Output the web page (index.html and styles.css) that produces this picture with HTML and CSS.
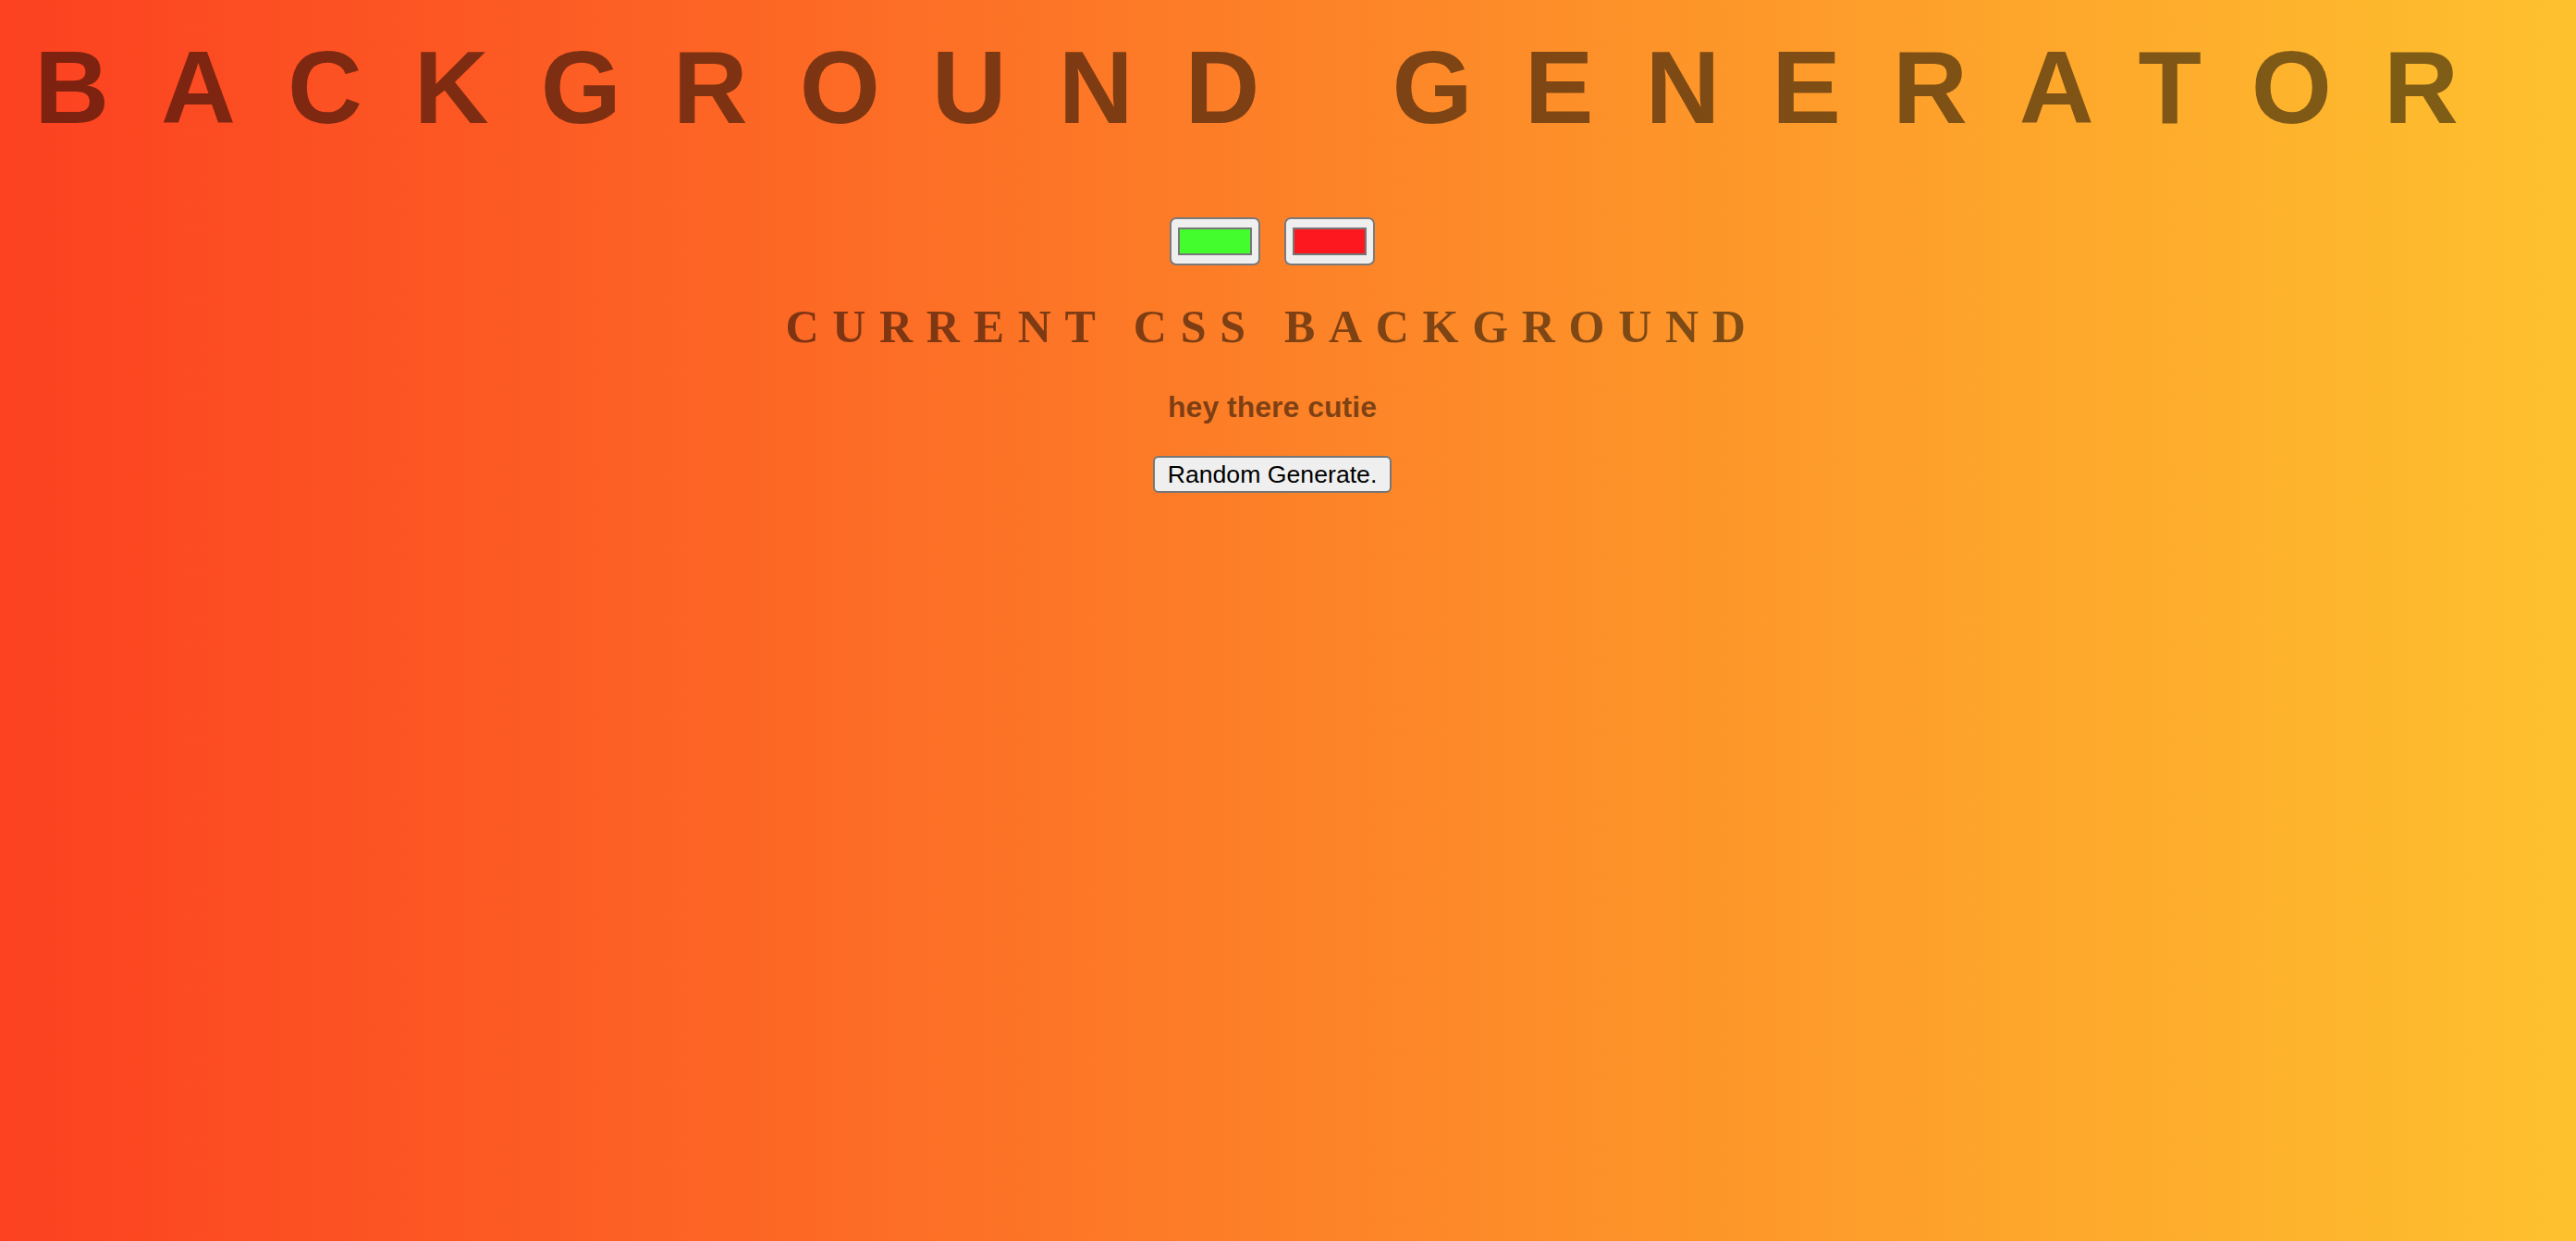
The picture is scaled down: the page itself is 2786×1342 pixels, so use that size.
FILE: index.html
```html
<!DOCTYPE html>
<html lang="en">
<head>
<meta charset="utf-8">
<title>Background Generator</title>
<link rel="stylesheet" href="styles.css">
</head>
<body class="page-body">
  <main class="page">
    <h1 class="title">Background Generator</h1>
    <div class="pickers">
      <input class="color-input" type="color" name="color1" value="#43fd2c">
      <input class="color-input" type="color" name="color2" value="#fd181f">
    </div>
    <h3 class="subtitle">Current CSS Background</h3>
    <p class="message">hey there cutie</p>
    <button class="random-btn" type="button">Random Generate.</button>
  </main>
</body>
</html>
```
FILE: styles.css
```css
html {
  background: linear-gradient(to right, #fc4121, #fec12e);
  min-height: 100%;
}

.page-body {
  margin: 0;
  min-height: 1342px;
  background: linear-gradient(to right, #fc4121, #fec12e);
}

.page {
  width: 2752px;
  padding-top: 31px;
  display: flex;
  flex-direction: column;
  align-items: center;
  text-align: center;
}

.title {
  margin: 0;
  font-family: "Liberation Sans", Arial, sans-serif;
  font-weight: 700;
  font-size: 112px;
  line-height: 128px;
  letter-spacing: 56px;
  text-transform: uppercase;
  color: rgba(0, 0, 0, 0.5);
  white-space: nowrap;
}

.pickers {
  margin-top: 76px;
  display: flex;
  gap: 26px;
}

.color-input {
  -webkit-appearance: none;
  appearance: none;
  box-sizing: border-box;
  width: 98px;
  height: 52px;
  margin: 0;
  padding: 9px 7px;
  border: 2px solid #7a7a7a;
  border-radius: 7px;
  background: #efefef;
  cursor: pointer;
}

.color-input::-webkit-color-swatch-wrapper {
  padding: 0;
}

.color-input::-webkit-color-swatch {
  border: 2px solid #777777;
  border-radius: 0;
}

.subtitle {
  margin: 37px 0 0;
  font-family: "Liberation Serif", "Times New Roman", serif;
  font-weight: 700;
  font-size: 50px;
  line-height: 58px;
  letter-spacing: 14.7px;
  text-transform: uppercase;
  color: rgba(0, 0, 0, 0.5);
}

.message {
  margin: 40px 0 0;
  font-family: "Liberation Sans", Arial, sans-serif;
  font-weight: 700;
  font-size: 32px;
  line-height: 37px;
  color: rgba(0, 0, 0, 0.5);
}

.random-btn {
  margin-top: 34px;
  box-sizing: border-box;
  height: 40px;
  padding: 2px 14px;
  border: 2px solid #767676;
  border-radius: 6px;
  background: #efefef;
  color: #000;
  font-family: "Liberation Sans", Arial, sans-serif;
  font-size: 26.67px;
  line-height: 32px;
  cursor: pointer;
}
```
